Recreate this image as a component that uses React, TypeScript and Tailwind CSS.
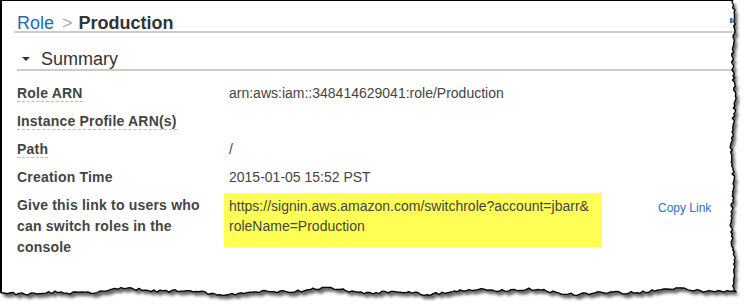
import React from 'react';

// torn paper edge (right + bottom), generated once
const rand = (() => {
  let s = 11;
  return () => {
    s = (s * 16807) % 2147483647;
    return s / 2147483647;
  };
})();

const pts: [number, number][] = [[0, 0], [733, 0]];
for (let y = 2; y <= 290; y += 2) {
  pts.push([733 + 1.2 * Math.sin(y / 13) + 0.9 * Math.sin(y / 41) + (rand() - 0.5) * 2.6, y]);
}
pts.push([736, 292]);
for (let x = 733; x >= 0; x -= 3) {
  pts.push([x, 291.5 + 2 * Math.sin(x / 29) + 1.2 * Math.sin(x / 11) + (rand() - 0.5) * 2.6]);
}
pts.push([0, 290]);

const toPath = (list: [number, number][]) =>
  list.map(([x, y], i) => `${i ? 'L' : 'M'}${x.toFixed(1)} ${y.toFixed(1)}`).join(' ');

const paperPath = toPath(pts) + ' Z';
const edgePath = toPath(pts.slice(1));
const outsidePath = 'M0 0H745V307H0Z ' + paperPath;

function TornEdge() {
  return (
    <svg className="absolute inset-0 pointer-events-none" width="745" height="307" viewBox="0 0 745 307">
      <defs>
        <clipPath id="outside">
          <path d={outsidePath} clipRule="evenodd" />
        </clipPath>
        <filter id="blur" x="-5%" y="-5%" width="110%" height="110%">
          <feGaussianBlur stdDeviation="1.8" />
        </filter>
      </defs>
      <path d={outsidePath} fill="#ffffff" fillRule="evenodd" />
      <g clipPath="url(#outside)">
        <path d={paperPath} transform="translate(3,4)" fill="#000" opacity="0.6" filter="url(#blur)" />
      </g>
      {/* sliver of a cut-off link at the torn edge */}
      <rect x="730" y="18" width="2.5" height="5" fill="#2a72c4" />
      <path d={edgePath} fill="none" stroke="#000" strokeWidth="1.3" strokeLinejoin="round" />
    </svg>
  );
}

const rows = [
  { label: 'Role ARN', value: 'arn:aws:iam::348414629041:role/Production', dashed: true },
  { label: 'Instance Profile ARN(s)', value: '', dashed: true },
  { label: 'Path', value: '/', dashed: true },
  { label: 'Creation Time', value: '2015-01-05 15:52 PST', dashed: false },
];

export default function App() {
  return (
    <div className="relative w-[745px] h-[307px] overflow-hidden bg-white font-['Liberation_Sans',Arial,sans-serif]">
      <div className="h-full border-l-2 border-t border-black pl-[12px]">
        {/* breadcrumb title */}
        <div className="mt-[14px] flex items-end border-b-2 border-[#cccccc] pl-[3px] text-[18px] leading-[16px]">
          <span className="text-[#1f6bb6]">Role</span>
          <span className="ml-[8px] text-[#a8a8a8]">&gt;</span>
          <span className="ml-[6px] font-bold text-[#333]">Production</span>
        </div>

        {/* summary header */}
        <div className="ml-[3px] mt-[16px] flex items-center border-b-2 border-[#cccccc] text-[18px] leading-[20px] text-[#333]">
          <span className="ml-[5px] h-0 w-0 border-x-4 border-t-4 border-x-transparent border-t-[#333]" />
          <span className="ml-[11px]">Summary</span>
        </div>

        {/* properties */}
        <div className="ml-[3px] mt-[14px]">
          {rows.map((r) => (
            <div key={r.label} className="flex h-[28px] items-start text-[14px] leading-4">
              <div className="w-[207px] shrink-0">
                <div
                  className={
                    r.dashed
                      ? 'w-fit border-b border-dashed border-[#bbbbbb] font-bold tracking-[0.2px] text-[#444]'
                      : 'w-fit font-bold tracking-[0.2px] text-[#444]'
                  }
                >
                  {r.label}
                </div>
              </div>
              <div className="pl-[5px] text-[#444]">{r.value}</div>
            </div>
          ))}

          <div className="-mt-[4px] flex items-start">
            <div className="w-[207px] shrink-0 pr-[10px] pt-[2px] text-[14px] font-bold leading-[21px] tracking-[0.2px] text-[#444]">
              Give this link to users who can switch roles in the console
            </div>
            <div className="w-[378px] shrink-0 bg-[#ffff55] pb-[11px] pl-[5px] pt-[3px] text-[14px] leading-[20px] text-[#444]">
              https://signin.aws.amazon.com/switchrole?account=jbarr&amp;
              <br />
              roleName=Production
            </div>
            <div className="ml-[56px] pt-[7px] text-[12px] leading-4 text-[#2d6fc9]">Copy Link</div>
          </div>
        </div>
      </div>
      <TornEdge />
    </div>
  );
}
